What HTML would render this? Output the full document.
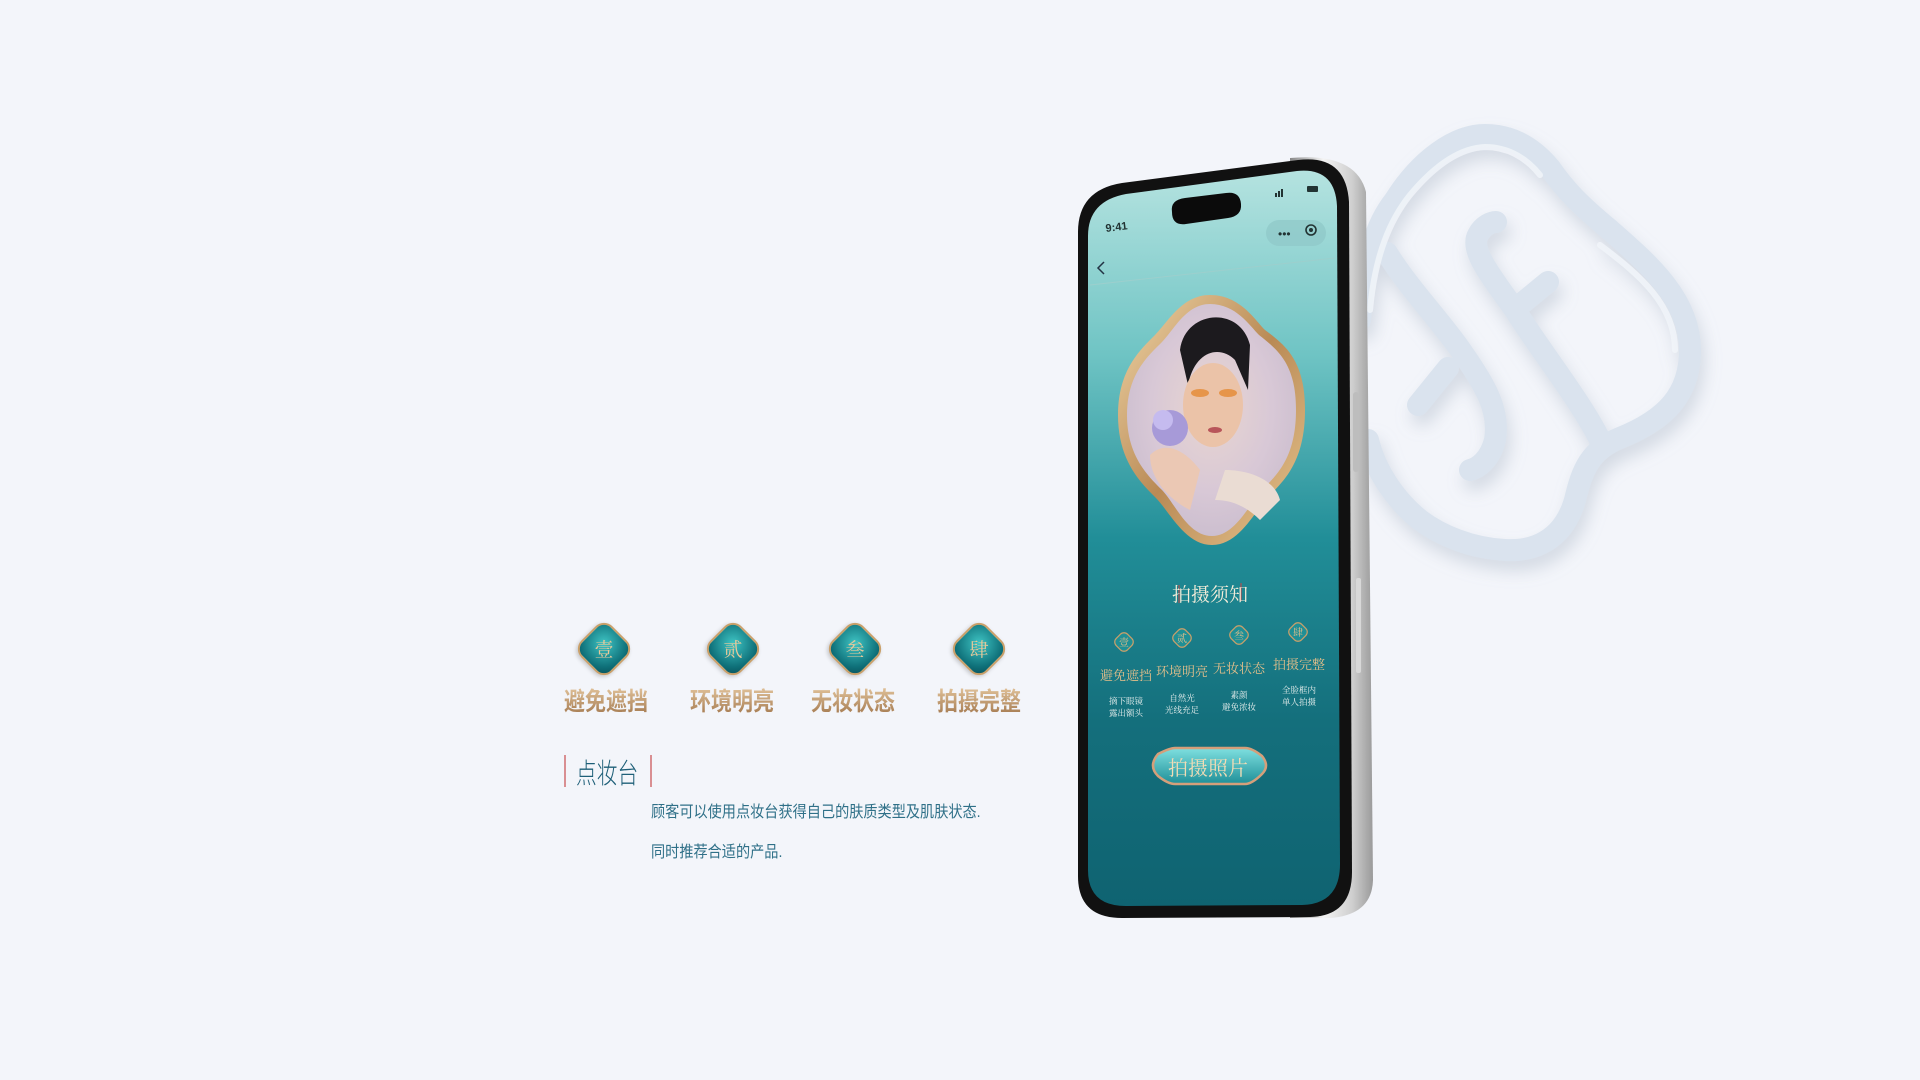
<!DOCTYPE html>
<html><head><meta charset="utf-8">
<style>
html,body{margin:0;padding:0;width:1920px;height:1080px;overflow:hidden;background:#f3f5fa;}
body{position:relative;font-family:"Liberation Sans","Noto Sans CJK SC",sans-serif;}
.ic{position:absolute;width:40px;height:40px;transform:rotate(45deg);border-radius:12px;background:radial-gradient(circle at 40% 40%,#3fc4c4,#0e6f78 70%,#0a4d55);border:2px solid #c9a06a;box-shadow:0 2px 4px rgba(0,0,0,.2);}
.ic span{position:absolute;left:0;top:0;width:40px;height:40px;line-height:40px;text-align:center;transform:rotate(-45deg);color:#e8c99a;font-size:19px;font-family:"Noto Serif CJK SC",serif;}
.lb{position:absolute;font-size:25px;color:#b88a5c;background:linear-gradient(#ecd0a8,#9e7248);-webkit-background-clip:text;background-clip:text;-webkit-text-fill-color:transparent;font-weight:bold;transform:scaleX(.84);transform-origin:left top;white-space:nowrap;}
.title{position:absolute;left:576px;top:752px;font-size:28px;color:#1e5f78;transform:scaleX(.74);transform-origin:left top;white-space:nowrap;font-weight:300;}
.bar{position:absolute;width:2px;height:32px;background:#d98f92;top:755px;}
.p{position:absolute;left:651px;font-size:16px;color:#2f7088;transform:scaleX(.885);transform-origin:left top;white-space:nowrap;}
</style></head><body>

<svg width="1920" height="1080" style="position:absolute;left:0;top:0">
<defs>
<filter id="sh" x="-20%" y="-20%" width="140%" height="140%"><feDropShadow dx="4" dy="10" stdDeviation="8" flood-color="#9aa8bb" flood-opacity=".35"/></filter>
<linearGradient id="scr" x1="0" y1="0" x2="0" y2="1">
<stop offset="0" stop-color="#b5e3e0"/><stop offset=".25" stop-color="#6fc4c4"/><stop offset=".5" stop-color="#218e98"/><stop offset=".75" stop-color="#146f7c"/><stop offset="1" stop-color="#0f6371"/></linearGradient>
<linearGradient id="sil" x1="0" y1="0" x2="1" y2="0"><stop offset="0" stop-color="#888"/><stop offset=".4" stop-color="#f4f4f4"/><stop offset=".75" stop-color="#cfcfcf"/><stop offset="1" stop-color="#9a9a9a"/></linearGradient>
<linearGradient id="gold" x1="0" y1="0" x2="1" y2="1"><stop offset="0" stop-color="#f0d6a8"/><stop offset=".5" stop-color="#b98a55"/><stop offset="1" stop-color="#e8c690"/></linearGradient>
<radialGradient id="face" cx=".5" cy=".45" r=".6"><stop offset="0" stop-color="#e9d6d0"/><stop offset=".6" stop-color="#d8c8d6"/><stop offset="1" stop-color="#c9bccd"/></radialGradient>
<linearGradient id="btn" x1="0" y1="0" x2="0" y2="1"><stop offset="0" stop-color="#7fe0e0"/><stop offset="1" stop-color="#1f8f98"/></linearGradient>
</defs>

<g filter="url(#sh)" fill="none" stroke-linecap="round" stroke-linejoin="round">
<g stroke="#dae3ee" stroke-width="22">
<path d="M1360,320 C1365,260 1375,225 1395,200 C1420,160 1455,135 1485,135 C1515,135 1535,150 1550,168 C1565,190 1580,205 1610,230 C1650,265 1690,300 1690,350 C1690,395 1665,420 1620,438 C1590,450 1582,470 1575,500 C1565,535 1540,552 1505,550 C1470,548 1440,535 1420,520 C1395,500 1375,470 1368,440"/>
<path d="M1600,440 C1580,400 1540,350 1515,310 C1490,275 1470,250 1478,235 C1483,225 1492,222 1496,222"/>
<path d="M1520,305 L1548,282"/>
<path d="M1387,253 C1410,290 1440,320 1462,352 C1485,385 1500,410 1495,440 C1490,460 1478,468 1470,470"/>
<path d="M1448,368 L1418,405"/>
</g>
<g stroke="#f2f6fa" stroke-width="6" opacity=".8">
<path d="M1370,310 C1375,255 1390,220 1410,195 C1435,165 1460,148 1485,147 C1510,147 1528,160 1540,175"/>
<path d="M1600,245 C1640,275 1675,305 1675,350"/>
</g>
</g>

<path d="M1290,158 Q1356,152 1366,192 L1373,880 Q1372,915 1330,918 L1290,918 Z" fill="url(#sil)"/>
<rect x="1353" y="392" width="6" height="80" rx="3" fill="#bdbdbd"/>
<rect x="1356" y="578" width="5" height="95" rx="2" fill="#d8d8d8"/>
<path d="M1078,232 Q1078,190 1122,183 L1298,160 Q1346,154 1349,202 L1352,872 Q1352,916 1310,917 L1122,918 Q1078,918 1078,876 Z" fill="#111"/>
<path d="M1088,236 Q1088,201 1126,194 L1297,171 Q1335,167 1337,206 L1340,864 Q1340,904 1302,905 L1126,906 Q1088,906 1088,870 Z" fill="url(#scr)"/>
<path d="M1172,212 Q1170,200 1185,198 L1226,193 Q1240,191 1241,204 Q1242,216 1228,218 L1186,224 Q1172,226 1172,212 Z" fill="#0b0b0b"/>
<text x="1106" y="232" font-size="11" fill="#233" font-weight="bold" transform="rotate(-7 1106 232)">9:41</text>
<g fill="#233"><rect x="1275" y="193" width="2" height="4"/><rect x="1278" y="191" width="2" height="6"/><rect x="1281" y="189" width="2" height="8"/><rect x="1307" y="186" width="11" height="6" rx="1"/></g>
<rect x="1266" y="220" width="60" height="26" rx="13" fill="#8ec8c8" opacity=".7"/>
<circle cx="1311" cy="230" r="5" fill="none" stroke="#233" stroke-width="1.6"/><circle cx="1311" cy="230" r="2" fill="#233"/>
<text x="1278" y="238" font-size="12" fill="#233">•••</text>
<path d="M1104,262 L1098,268 L1104,274" fill="none" stroke="#234" stroke-width="1.5"/>
<line x1="1090" y1="285" x2="1335" y2="258" stroke="#9ccfcd" stroke-width="1"/>

<g>
<path d="M1210,295 C1240,295 1255,320 1265,330 C1285,345 1305,360 1305,410 C1305,460 1285,480 1270,495 C1255,510 1240,545 1212,545 C1185,545 1170,512 1155,497 C1140,482 1118,460 1118,415 C1118,370 1140,350 1155,335 C1168,322 1182,295 1210,295 Z" fill="url(#gold)"/>
<path d="M1210,304 C1236,304 1250,326 1259,335 C1278,350 1296,364 1296,410 C1296,456 1278,474 1264,488 C1250,502 1236,536 1212,536 C1188,536 1176,505 1162,490 C1148,476 1127,456 1127,415 C1127,374 1148,356 1162,342 C1174,330 1186,304 1210,304 Z" fill="url(#face)"/>
<path d="M1180,350 C1185,310 1240,305 1250,345 L1248,390 L1235,360 C1220,345 1195,350 1188,385 Z" fill="#1c1a1e"/>
<ellipse cx="1213" cy="405" rx="30" ry="42" fill="#ebc3a8"/>
<ellipse cx="1200" cy="393" rx="9" ry="4" fill="#e6954a"/><ellipse cx="1228" cy="393" rx="9" ry="4" fill="#e6954a"/>
<ellipse cx="1215" cy="430" rx="7" ry="3" fill="#b8555a"/>
<circle cx="1170" cy="428" r="18" fill="#a79ad8"/><circle cx="1163" cy="420" r="10" fill="#c5bbef"/>
<path d="M1150,455 C1165,440 1185,450 1200,470 L1190,510 C1170,500 1150,480 1150,455 Z" fill="#ebc8b4"/>
<path d="M1225,470 C1250,470 1275,480 1280,500 L1260,520 C1245,505 1230,500 1215,500 Z" fill="#eadcd3"/>
</g>

<g font-family="Liberation Sans,Noto Serif CJK SC,serif">
<line x1="1179" y1="585" x2="1179" y2="603" stroke="#c44" stroke-width="1"/>
<line x1="1241" y1="583" x2="1241" y2="601" stroke="#c44" stroke-width="1"/>
<text x="1210" y="601" font-size="19" fill="#f3ecd9" text-anchor="middle">拍摄须知</text>
<g>
<rect x="1116" y="634" width="16" height="16" rx="5" fill="#1f8f96" stroke="#caa06a" stroke-width="1.2" transform="rotate(45 1124 642)"/>
<rect x="1174" y="630" width="16" height="16" rx="5" fill="#1f8f96" stroke="#caa06a" stroke-width="1.2" transform="rotate(45 1182 638)"/>
<rect x="1231" y="627" width="16" height="16" rx="5" fill="#1f8f96" stroke="#caa06a" stroke-width="1.2" transform="rotate(45 1239 635)"/>
<rect x="1290" y="624" width="16" height="16" rx="5" fill="#1f8f96" stroke="#caa06a" stroke-width="1.2" transform="rotate(45 1298 632)"/>
</g>
<g font-size="10" fill="#e5bf8a" text-anchor="middle">
<text x="1124" y="646">壹</text><text x="1182" y="642">贰</text><text x="1239" y="639">叁</text><text x="1298" y="636">肆</text>
</g>
<g font-size="13" fill="#e5bf8a" text-anchor="middle">
<text x="1126" y="680">避免遮挡</text><text x="1182" y="676">环境明亮</text><text x="1239" y="673">无妆状态</text><text x="1299" y="669">拍摄完整</text>
</g>
<g font-size="8.5" fill="#e9f0ee" text-anchor="middle">
<text x="1126" y="704">摘下眼镜</text><text x="1126" y="716">露出额头</text>
<text x="1182" y="701">自然光</text><text x="1182" y="713">光线充足</text>
<text x="1239" y="698">素颜</text><text x="1239" y="710">避免浓妆</text>
<text x="1299" y="693">全脸框内</text><text x="1299" y="705">单人拍摄</text>
</g>
<path d="M1158,754 Q1170,748 1175,748 L1245,748 Q1252,748 1262,756 Q1270,766 1262,774 Q1252,784 1245,784 L1175,784 Q1168,784 1158,776 Q1148,766 1158,754 Z" fill="url(#btn)" stroke="#d59f7a" stroke-width="2.5"/>
<text x="1208" y="775" font-size="20" fill="#f1dcb5" text-anchor="middle">拍摄照片</text>
</g>
</svg>

<div class="ic" style="left:582px;top:627px"><span>壹</span></div>
<div class="ic" style="left:711px;top:627px"><span>贰</span></div>
<div class="ic" style="left:833px;top:627px"><span>叁</span></div>
<div class="ic" style="left:957px;top:627px"><span>肆</span></div>
<div class="lb" style="left:564px;top:682px">避免遮挡</div>
<div class="lb" style="left:690px;top:682px">环境明亮</div>
<div class="lb" style="left:811px;top:682px">无妆状态</div>
<div class="lb" style="left:937px;top:682px">拍摄完整</div>

<div class="bar" style="left:564px"></div>
<div class="title">点妆台</div>
<div class="bar" style="left:650px"></div>
<div class="p" style="top:798px">顾客可以使用点妆台获得自己的肤质类型及肌肤状态.</div>
<div class="p" style="top:838px">同时推荐合适的产品.</div>
</body></html>
